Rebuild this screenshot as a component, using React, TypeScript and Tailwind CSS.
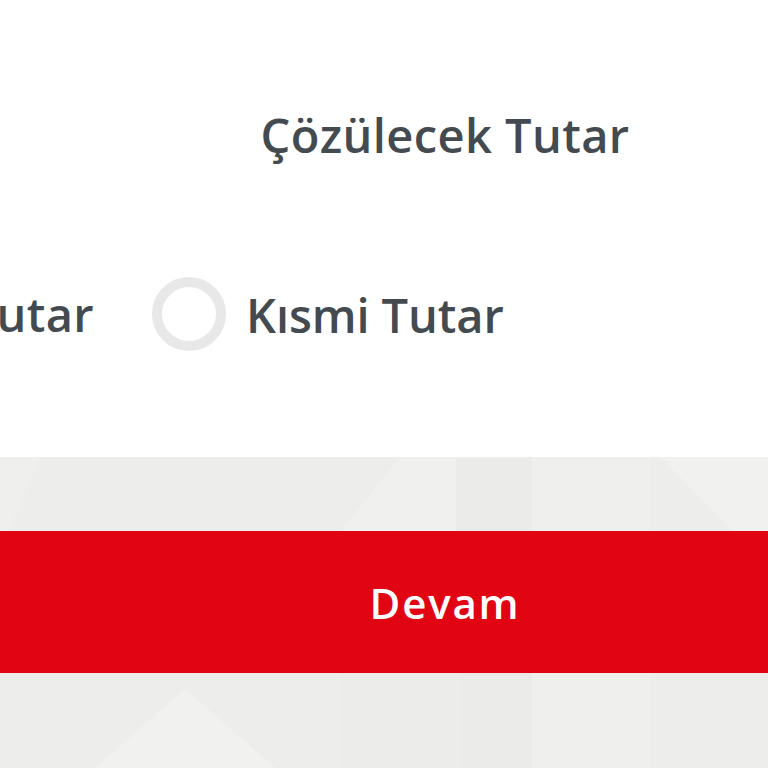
import React from 'react'

function Radio({ checked = false }: { checked?: boolean }) {
  return (
    <span
      className={`block w-[74px] h-[74px] shrink-0 rounded-full border-[10px] ${
        checked ? 'border-[#e10514]' : 'border-[#e8e8e8]'
      } bg-white`}
    />
  )
}

function Pattern() {
  // soft geometric shapes behind the button area
  return (
    <svg className="absolute inset-0 w-full h-full" viewBox="0 0 768 311" preserveAspectRatio="none">
      <rect x="0" y="0" width="768" height="311" fill="#ededec" />
      <polygon points="0,0 0,95 40,0" fill="#efefee" />
      <polygon points="400,0 340,75 340,311 456,311 456,0" fill="#f0f0ef" />
      <rect x="456" y="0" width="76" height="311" fill="#ebebea" />
      <rect x="532" y="0" width="118" height="311" fill="#efefee" />
      <polygon points="660,0 768,0 768,110" fill="#f1f1f0" />
      <polygon points="185,232 95,311 275,311" fill="#f1f1f0" />
      <rect x="340" y="215" width="120" height="96" fill="#ececeb" />
    </svg>
  )
}

export default function App() {
  const font = { fontFamily: '"Open Sans", "Liberation Sans", sans-serif' }

  return (
    <div className="w-[768px] h-[768px] overflow-hidden bg-white flex flex-col" style={font}>
      {/* Header + options */}
      <div className="h-[457px] shrink-0 bg-white w-[890px] flex flex-col">
        <h1 className="mt-[106px] text-center text-[47px] leading-[58px] font-semibold text-[#434a50] tracking-[0.4px]">
          Çözülecek Tutar
        </h1>
        <div className="mt-[113px] flex items-center">
          <div className="w-[94px] flex justify-end whitespace-nowrap text-[47px] leading-none font-semibold text-[#434a50] tracking-[0.4px]">
            Toplam Tutar
          </div>
          <div className="ml-[58px] flex items-center gap-[20px]">
            <Radio />
            <span className="pt-[3px] text-[47px] leading-none font-semibold text-[#434a50] tracking-[-0.1px]">
              Kısmi Tutar
            </span>
          </div>
        </div>
      </div>

      {/* Footer with button */}
      <div className="relative flex-1 bg-[#ededec]">
        <Pattern />
        <div className="relative mt-[74px] w-[890px]">
          <button className="w-full h-[142px] bg-[#e10514] text-white text-[42px] font-semibold tracking-[1.8px]">
            Devam
          </button>
        </div>
      </div>
    </div>
  )
}
